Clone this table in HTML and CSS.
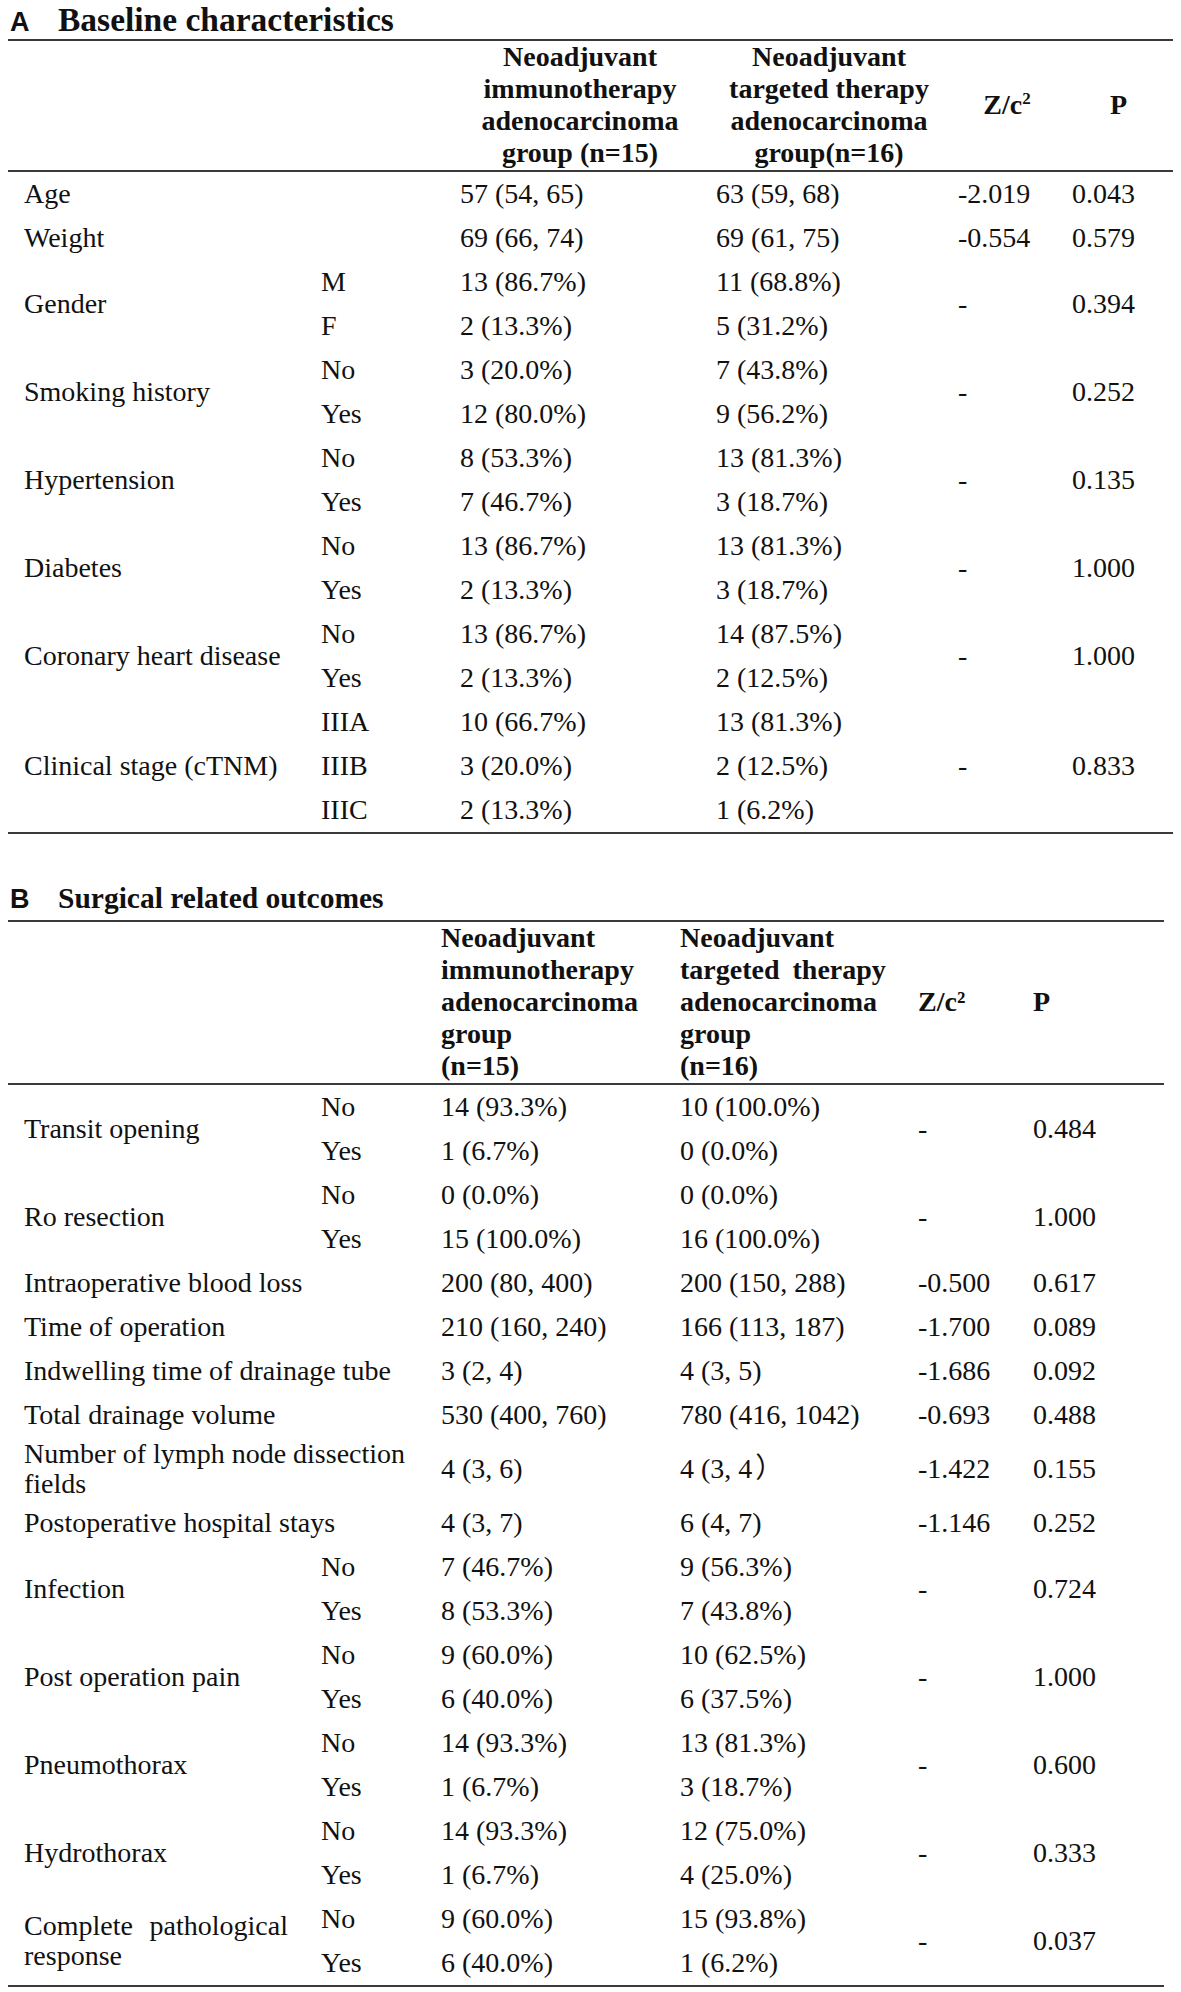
FILE: index.html
```html
<!DOCTYPE html>
<html lang="en">
<head>
<meta charset="utf-8">
<title>Baseline characteristics and surgical related outcomes</title>
<link rel="stylesheet" href="styles.css">
</head>
<body>
<section class="panel panel-a">
  <h2 class="panel-title"><span class="panel-letter">A</span><span class="panel-name">Baseline characteristics</span></h2>
  <table class="stats stats-a">
    <colgroup>
      <col class="a-label"><col class="a-sub"><col class="a-g1"><col class="a-g2"><col class="a-z"><col class="a-p">
    </colgroup>
    <thead>
      <tr>
        <th></th><th></th>
        <th class="ha-g1">Neoadjuvant<br>immunotherapy<br>adenocarcinoma<br>group (n=15)</th>
        <th class="ha-g2">Neoadjuvant<br>targeted therapy<br>adenocarcinoma<br>group(n=16)</th>
        <th class="ha-z">Z/c<sup>2</sup></th>
        <th class="ha-p">P</th>
      </tr>
    </thead>
    <tbody>
      <tr><td class="label" colspan="2">Age</td><td>57 (54, 65)</td><td>63 (59, 68)</td><td>-2.019</td><td>0.043</td></tr>
      <tr><td class="label" colspan="2">Weight</td><td>69 (66, 74)</td><td>69 (61, 75)</td><td>-0.554</td><td>0.579</td></tr>
      <tr><td class="label" rowspan="2">Gender</td><td>M</td><td>13 (86.7%)</td><td>11 (68.8%)</td><td rowspan="2">-</td><td rowspan="2">0.394</td></tr>
      <tr><td>F</td><td>2 (13.3%)</td><td>5 (31.2%)</td></tr>
      <tr><td class="label" rowspan="2">Smoking history</td><td>No</td><td>3 (20.0%)</td><td>7 (43.8%)</td><td rowspan="2">-</td><td rowspan="2">0.252</td></tr>
      <tr><td>Yes</td><td>12 (80.0%)</td><td>9 (56.2%)</td></tr>
      <tr><td class="label" rowspan="2">Hypertension</td><td>No</td><td>8 (53.3%)</td><td>13 (81.3%)</td><td rowspan="2">-</td><td rowspan="2">0.135</td></tr>
      <tr><td>Yes</td><td>7 (46.7%)</td><td>3 (18.7%)</td></tr>
      <tr><td class="label" rowspan="2">Diabetes</td><td>No</td><td>13 (86.7%)</td><td>13 (81.3%)</td><td rowspan="2">-</td><td rowspan="2">1.000</td></tr>
      <tr><td>Yes</td><td>2 (13.3%)</td><td>3 (18.7%)</td></tr>
      <tr><td class="label" rowspan="2">Coronary heart disease</td><td>No</td><td>13 (86.7%)</td><td>14 (87.5%)</td><td rowspan="2">-</td><td rowspan="2">1.000</td></tr>
      <tr><td>Yes</td><td>2 (13.3%)</td><td>2 (12.5%)</td></tr>
      <tr><td class="label" rowspan="3">Clinical stage (cTNM)</td><td>IIIA</td><td>10 (66.7%)</td><td>13 (81.3%)</td><td rowspan="3">-</td><td rowspan="3">0.833</td></tr>
      <tr><td>IIIB</td><td>3 (20.0%)</td><td>2 (12.5%)</td></tr>
      <tr><td>IIIC</td><td>2 (13.3%)</td><td>1 (6.2%)</td></tr>
    </tbody>
  </table>
</section>

<section class="panel panel-b">
  <h2 class="panel-title"><span class="panel-letter">B</span><span class="panel-name">Surgical related outcomes</span></h2>
  <table class="stats stats-b">
    <colgroup>
      <col class="b-label"><col class="b-sub"><col class="b-g1"><col class="b-g2"><col class="b-z"><col class="b-p">
    </colgroup>
    <thead>
      <tr>
        <th></th><th></th>
        <th class="hb">Neoadjuvant<br>immunotherapy<br>adenocarcinoma<br>group<br>(n=15)</th>
        <th class="hb">Neoadjuvant<br><span class="spread">targeted therapy</span><br>adenocarcinoma<br>group<br>(n=16)</th>
        <th class="hb">Z/c²</th>
        <th class="hb">P</th>
      </tr>
    </thead>
    <tbody>
      <tr><td class="label" rowspan="2">Transit opening</td><td>No</td><td>14 (93.3%)</td><td>10 (100.0%)</td><td rowspan="2">-</td><td rowspan="2">0.484</td></tr>
      <tr><td>Yes</td><td>1 (6.7%)</td><td>0 (0.0%)</td></tr>
      <tr><td class="label" rowspan="2">Ro resection</td><td>No</td><td>0 (0.0%)</td><td>0 (0.0%)</td><td rowspan="2">-</td><td rowspan="2">1.000</td></tr>
      <tr><td>Yes</td><td>15 (100.0%)</td><td>16 (100.0%)</td></tr>
      <tr><td class="label wide" colspan="2">Intraoperative blood loss</td><td>200 (80, 400)</td><td>200 (150, 288)</td><td>-0.500</td><td>0.617</td></tr>
      <tr><td class="label wide" colspan="2">Time of operation</td><td>210 (160, 240)</td><td>166 (113, 187)</td><td>-1.700</td><td>0.089</td></tr>
      <tr><td class="label wide" colspan="2">Indwelling time of drainage tube</td><td>3 (2, 4)</td><td>4 (3, 5)</td><td>-1.686</td><td>0.092</td></tr>
      <tr><td class="label wide" colspan="2">Total drainage volume</td><td>530 (400, 760)</td><td>780 (416, 1042)</td><td>-0.693</td><td>0.488</td></tr>
      <tr class="row-tight"><td class="label wide" colspan="2">Number of lymph node dissection fields</td><td>4 (3, 6)</td><td>4 (3, 4<span class="fw-paren">）</span></td><td>-1.422</td><td>0.155</td></tr>
      <tr><td class="label wide" colspan="2">Postoperative hospital stays</td><td>4 (3, 7)</td><td>6 (4, 7)</td><td>-1.146</td><td>0.252</td></tr>
      <tr><td class="label" rowspan="2">Infection</td><td>No</td><td>7 (46.7%)</td><td>9 (56.3%)</td><td rowspan="2">-</td><td rowspan="2">0.724</td></tr>
      <tr><td>Yes</td><td>8 (53.3%)</td><td>7 (43.8%)</td></tr>
      <tr><td class="label" rowspan="2">Post operation pain</td><td>No</td><td>9 (60.0%)</td><td>10 (62.5%)</td><td rowspan="2">-</td><td rowspan="2">1.000</td></tr>
      <tr><td>Yes</td><td>6 (40.0%)</td><td>6 (37.5%)</td></tr>
      <tr><td class="label" rowspan="2">Pneumothorax</td><td>No</td><td>14 (93.3%)</td><td>13 (81.3%)</td><td rowspan="2">-</td><td rowspan="2">0.600</td></tr>
      <tr><td>Yes</td><td>1 (6.7%)</td><td>3 (18.7%)</td></tr>
      <tr><td class="label" rowspan="2">Hydrothorax</td><td>No</td><td>14 (93.3%)</td><td>12 (75.0%)</td><td rowspan="2">-</td><td rowspan="2">0.333</td></tr>
      <tr><td>Yes</td><td>1 (6.7%)</td><td>4 (25.0%)</td></tr>
      <tr><td class="label justify" rowspan="2">Complete pathological response</td><td>No</td><td>9 (60.0%)</td><td>15 (93.8%)</td><td rowspan="2">-</td><td rowspan="2">0.037</td></tr>
      <tr><td>Yes</td><td>6 (40.0%)</td><td>1 (6.2%)</td></tr>
    </tbody>
  </table>
</section>
</body>
</html>
```

FILE: styles.css
```css
html, body {
  margin: 0;
  padding: 0;
  background: #ffffff;
}

body {
  color: #111111;
  font-family: "Liberation Serif", "Noto Sans CJK SC", serif;
  width: 1181px;
}

.panel-title {
  margin: 0;
  padding-left: 10px;
  height: 39px;
  line-height: 39px;
  font-size: 33.5px;
  font-weight: bold;
  white-space: nowrap;
}

.panel-letter {
  display: inline-block;
  width: 48px;
  font-family: "Liberation Sans", Arial, sans-serif;
  font-size: 27px;
  font-weight: bold;
  line-height: 1;
}

.panel-b {
  margin-top: 43px;
}

.panel-b .panel-title {
  height: 43px;
  line-height: 43px;
  font-size: 29.5px;
}

.stats {
  table-layout: fixed;
  border-collapse: separate;
  border-spacing: 0;
  margin-left: 8px;
  border-top: 2px solid #3a3a3a;
  border-bottom: 2px solid #3a3a3a;
  font-size: 28px;
}

.stats-a { width: 1165px; }
.stats-b { width: 1156px; }

.a-label { width: 305px; }
.a-sub { width: 139px; }
.a-g1 { width: 256px; }
.a-g2 { width: 242px; }
.a-z { width: 114px; }
.a-p { width: 109px; }

.b-label { width: 305px; }
.b-sub { width: 120px; }
.b-g1 { width: 239px; }
.b-g2 { width: 238px; }
.b-z { width: 115px; }
.b-p { width: 139px; }

.stats th {
  font-weight: bold;
  line-height: 32px;
  padding: 0 0 1px 0;
  border-bottom: 2px solid #3a3a3a;
  vertical-align: middle;
  white-space: nowrap;
  text-align: center;
}

.stats th sup {
  font-size: 17px;
  line-height: 0;
  vertical-align: 10px;
}

.ha-g1 { padding-right: 46px; }
.ha-g2 { padding-right: 44px; }
.ha-z { padding-right: 14px; }
.ha-p { padding-right: 27px; }

.stats th.hb {
  text-align: left;
  padding-left: 8px;
}

.spread {
  word-spacing: 6px;
}

.stats tbody tr {
  height: 44px;
}

.stats td {
  line-height: 30px;
  padding: 7px 0 7px 8px;
  vertical-align: middle;
  white-space: nowrap;
  text-align: left;
}

.stats td.label {
  padding-left: 16px;
}

.stats td.wide {
  white-space: normal;
  padding-right: 8px;
}

.stats td.justify {
  white-space: normal;
  text-align: justify;
  padding-right: 25px;
}

.stats tr.row-tight td {
  padding-top: 2px;
  padding-bottom: 2px;
}

.fw-paren {
  margin-left: 3px;
}
```
